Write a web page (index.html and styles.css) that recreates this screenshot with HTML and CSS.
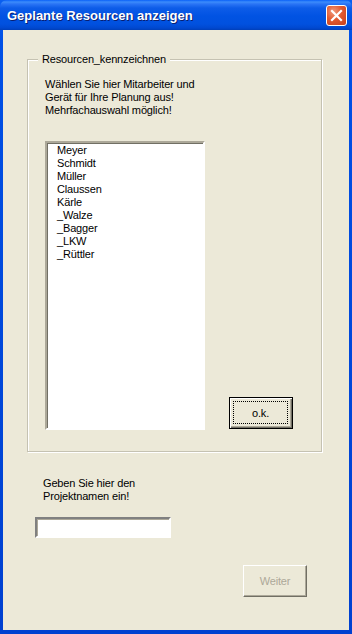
FILE: index.html
```html
<!DOCTYPE html>
<html>
<head>
<meta charset="utf-8">
<link rel="stylesheet" href="styles.css">
</head>
<body>
<div class="window">
  <div class="titlebar">
    <span class="title">Geplante Resourcen anzeigen</span>
    <div class="close">
      <svg width="13" height="13" viewBox="0 0 13 13"><path d="M2 2 L11 11 M11 2 L2 11" stroke="#fff" stroke-width="2.2" stroke-linecap="square"/></svg>
    </div>
  </div>
  <div class="client">
    <div class="group">
      <span class="legend">Resourcen_kennzeichnen</span>
      <p class="info">Wählen Sie hier Mitarbeiter und<br>Gerät für Ihre Planung aus!<br>Mehrfachauswahl möglich!</p>
      <div class="row">
        <ul class="list">
          <li>Meyer</li>
          <li>Schmidt</li>
          <li>Müller</li>
          <li>Claussen</li>
          <li>Kärle</li>
          <li>_Walze</li>
          <li>_Bagger</li>
          <li>_LKW</li>
          <li>_Rüttler</li>
        </ul>
        <div class="btn default"><span class="focus">o.k.</span></div>
      </div>
    </div>
    <p class="info2">Geben Sie hier den<br>Projektnamen ein!</p>
    <div class="input"></div>
    <div class="bottom">
      <div class="btn disabled">Weiter</div>
    </div>
  </div>
</div>
</body>
</html>
```
FILE: styles.css
```css
* { box-sizing: border-box; }
html, body { margin: 0; padding: 0; }
body { width: 352px; height: 634px; font-family: "Liberation Sans", Arial, sans-serif; font-size: 11px; letter-spacing: -0.15px; }
.window {
  width: 352px; height: 634px;
  display: flex; flex-direction: column;
  padding: 0 3px 4px 3px;
  background: linear-gradient(to bottom, #0a5ff0 0, #0050e6 40px, #0040d0 100%);
}
.titlebar {
  height: 30px; margin: 0 -3px;
  background: linear-gradient(to bottom, #0a61f8 0, #3c8cfb 2px, #2a74f5 4px, #0d5ce8 8px, #0153e3 16px, #0151df 24px, #0048d0 28px, #003fb8 30px);
  border-radius: 7px 7px 0 0;
  display: flex; align-items: center; justify-content: space-between;
  padding: 0 5px 0 7px;
}
.title {
  color: #fff; font-family: "Liberation Sans", Arial, sans-serif; font-weight: bold; font-size: 13px;
  text-shadow: 1px 1px 0 #0a1e6f; letter-spacing: 0;
  padding-top: 1px;
}
.close {
  width: 21px; height: 21px; border: 1px solid #fff; border-radius: 3px;
  background: radial-gradient(circle at 35% 30%, #f09a7c 0, #e2592f 45%, #c5401e 100%);
  display: flex; align-items: center; justify-content: center;
  margin-top: 1px;
}
.client {
  flex: 1; background: #ece9d8;
  padding: 29px 0 0 24px;
  display: flex; flex-direction: column;
}
.group {
  position: relative;
  width: 295px; height: 393px;
  border: 1px solid #c5c2b2;
  box-shadow: inset 1px 1px 0 #fff, 1px 1px 0 #fff;
  padding: 18px 0 0 17px;
}
.legend {
  position: absolute; top: -8px; left: 10px;
  background: #ece9d8; padding: 0 4px; line-height: 14px; color: #000;
}
.info { margin: 0; line-height: 13px; color: #000; }
.row { display: flex; align-items: flex-end; margin-top: 24px; }
.list {
  margin: 0; padding: 1px 0 0 10px; list-style: none;
  width: 160px; height: 289px; background: #fff;
  border: 2px solid; border-color: #aca899 #fff #fff #aca899;
  box-shadow: inset 1px 1px 0 #716f64;
  line-height: 13px;
}
.list li { height: 13px; }
.btn {
  display: flex; align-items: center; justify-content: center;
  background: #ece9d8; color: #000;
}
.default {
  width: 64px; height: 32px; margin-left: 24px; margin-bottom: 1px;
  border: 1px solid #000;
  box-shadow: inset 1px 1px 0 #fff, inset -1px -1px 0 #716f64, inset -2px -2px 0 #aca899;
  padding: 3px 4px 4px 3px;
}
.focus {
  flex: 1; align-self: stretch; border: 1px dotted #000;
  display: flex; align-items: center; justify-content: center;
}
.info2 { margin: 25px 0 0 16px; line-height: 13px; }
.input {
  margin: 14px 0 0 8px; width: 136px; height: 21px; background: #fff;
  border: 2px solid; border-color: #808080 #fff #fff #808080;
  box-shadow: inset 1px 1px 0 #aca899;
}
.bottom { display: flex; justify-content: flex-start; padding-left: 216px; margin-top: 27px; }
.disabled {
  width: 64px; height: 32px; color: #aca899;
  border: 1px solid; border-color: #fff #716f64 #716f64 #fff;
  box-shadow: inset -1px -1px 0 #aca899;
}
```
